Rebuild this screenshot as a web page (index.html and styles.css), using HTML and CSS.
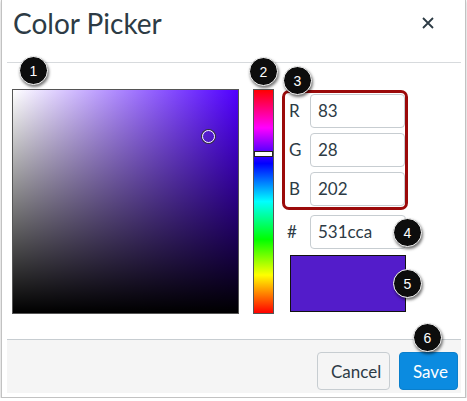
FILE: index.html
```html
<!DOCTYPE html>
<html>
<head>
<meta charset="utf-8">
<link rel="stylesheet" href="styles.css">
</head>
<body>
<div class="frame">
  <div class="header">
    <h1 class="title">Color Picker</h1>
    <svg class="close" width="12" height="12" viewBox="0 0 12 12"><path d="M1 1 L11 11 M11 1 L1 11" stroke="#2d3b45" stroke-width="1.8" fill="none"/></svg>
  </div>
  <div class="body">
    <div class="sat">
      <div class="marker"></div>
    </div>
    <div class="hue">
      <div class="hue-handle"></div>
    </div>
    <div class="col">
      <div class="rgb-box">
        <div class="row"><span class="lbl">R</span><div class="inp">83</div></div>
        <div class="row"><span class="lbl">G</span><div class="inp">28</div></div>
        <div class="row"><span class="lbl">B</span><div class="inp">202</div></div>
      </div>
      <div class="row hex-row"><span class="lbl hash">#</span><div class="inp">531cca</div></div>
      <div class="swatch"></div>
    </div>
  </div>
  <div class="footer">
    <button class="btn cancel">Cancel</button>
    <button class="btn save">Save</button>
  </div>
  <span class="badge b1">1</span>
  <span class="badge b2">2</span>
  <span class="badge b3">3</span>
  <span class="badge b4">4</span>
  <span class="badge b5">5</span>
  <span class="badge b6">6</span>
</div>
</body>
</html>
```
FILE: styles.css
```css
html, body { margin: 0; padding: 0; background: #fff; }
body { font-family: Lato, "Liberation Sans", sans-serif; color: #2d3b45; }
.frame {
  position: relative;
  margin-left: 1px;
  width: 465px;
  box-sizing: border-box;
  border: 1px solid #c2c2c2;
  border-top: none;
  padding: 0 4px 4px 5px;
  box-shadow: 0 1px 3px rgba(0,0,0,0.25);
}
.header {
  height: 63px;
  box-sizing: border-box;
  border-bottom: 1px solid #d7dadd;
  display: flex;
  align-items: flex-start;
  justify-content: space-between;
  padding: 6px 27px 0 6px;
}
.title { margin: 0; font-size: 28px; font-weight: 400; line-height: 34px; color: #2d3b45; }
.close { margin-top: 11px; }
.body {
  height: 276px;
  box-sizing: border-box;
  display: flex;
  align-items: flex-start;
  padding: 26px 0 0 5px;
}
.sat {
  position: relative;
  width: 227px; height: 225px;
  box-sizing: border-box;
  border: 1px solid #555;
  background: linear-gradient(to top, #000, rgba(0,0,0,0)), linear-gradient(to right, #fff, hsl(259,100%,50%));
}
.marker {
  position: absolute; left: 189px; top: 40px;
  width: 11px; height: 11px; border-radius: 50%;
  border: 1.5px solid #fff; box-shadow: 0 0 0 1px #333;
}
.hue {
  position: relative;
  margin-left: 14px;
  width: 21px; height: 225px;
  box-sizing: border-box;
  border: 1px solid #555;
  background: linear-gradient(to bottom, #f00 0%, #f0f 17%, #00f 33%, #0ff 50%, #0f0 67%, #ff0 83%, #f00 100%);
}
.hue-handle {
  position: absolute; left: 0; right: 0; top: 61px; height: 4px;
  background: #fff; border: 1px solid #222;
}
.col { margin-left: 8px; margin-top: 1px; display: flex; flex-direction: column; }
.rgb-box {
  width: 126px; height: 120px; box-sizing: border-box;
  border: 3px solid #9b0a0a; border-radius: 7px;
  padding: 1px 0 0 4px;
  display: flex; flex-direction: column; gap: 5px;
}
.row { display: flex; align-items: center; }
.lbl { width: 21px; font-size: 17px; line-height: 34px; }
.inp {
  width: 96px; height: 34px; box-sizing: border-box;
  border: 1px solid #c7cdd1; border-radius: 4px;
  padding-left: 7px; font-size: 17px; line-height: 32px; background: #fff;
}
.rgb-box .inp { width: 95px; }
.hex-row { margin-top: 5px; padding-left: 5px; }
.hash { width: 23px; }
.swatch {
  margin-top: 6px; margin-left: 8px;
  width: 116px; height: 57px; box-sizing: border-box;
  background: #531cca; border: 1px solid #111;
}
.footer {
  height: 54px; box-sizing: border-box;
  border-top: 1px solid #c7cdd1;
  background: #f5f5f5;
  display: flex; justify-content: flex-end; align-items: flex-start;
  gap: 9px;
  padding: 12px 3px 0 0;
}
.btn {
  height: 38px; box-sizing: border-box;
  font-family: Lato, "Liberation Sans", sans-serif; font-size: 17px;
  border-radius: 4px; padding: 0 13px; margin: 0;
}
.cancel { width: 73px; background: #f5f5f5; border: 1px solid #c7cdd1; color: #2d3b45; }
.save { width: 59px; background: #0b8be0; border: 1px solid #0a7fcc; color: #fff; }
.badge {
  position: absolute;
  width: 27px; height: 27px; border-radius: 50%;
  background: #0d0d0d; border: 1.5px solid #fff;
  box-shadow: 1px 2px 3px rgba(0,0,0,0.55);
  color: #fff; font-family: "Liberation Sans", Arial, sans-serif; font-size: 14px;
  display: flex; align-items: center; justify-content: center;
}
.b1 { left: 17px; top: 56px; }
.b2 { left: 247px; top: 57px; }
.b3 { left: 281px; top: 66px; }
.b4 { left: 391px; top: 218px; }
.b5 { left: 391px; top: 269px; }
.b6 { left: 411px; top: 323px; }
```
